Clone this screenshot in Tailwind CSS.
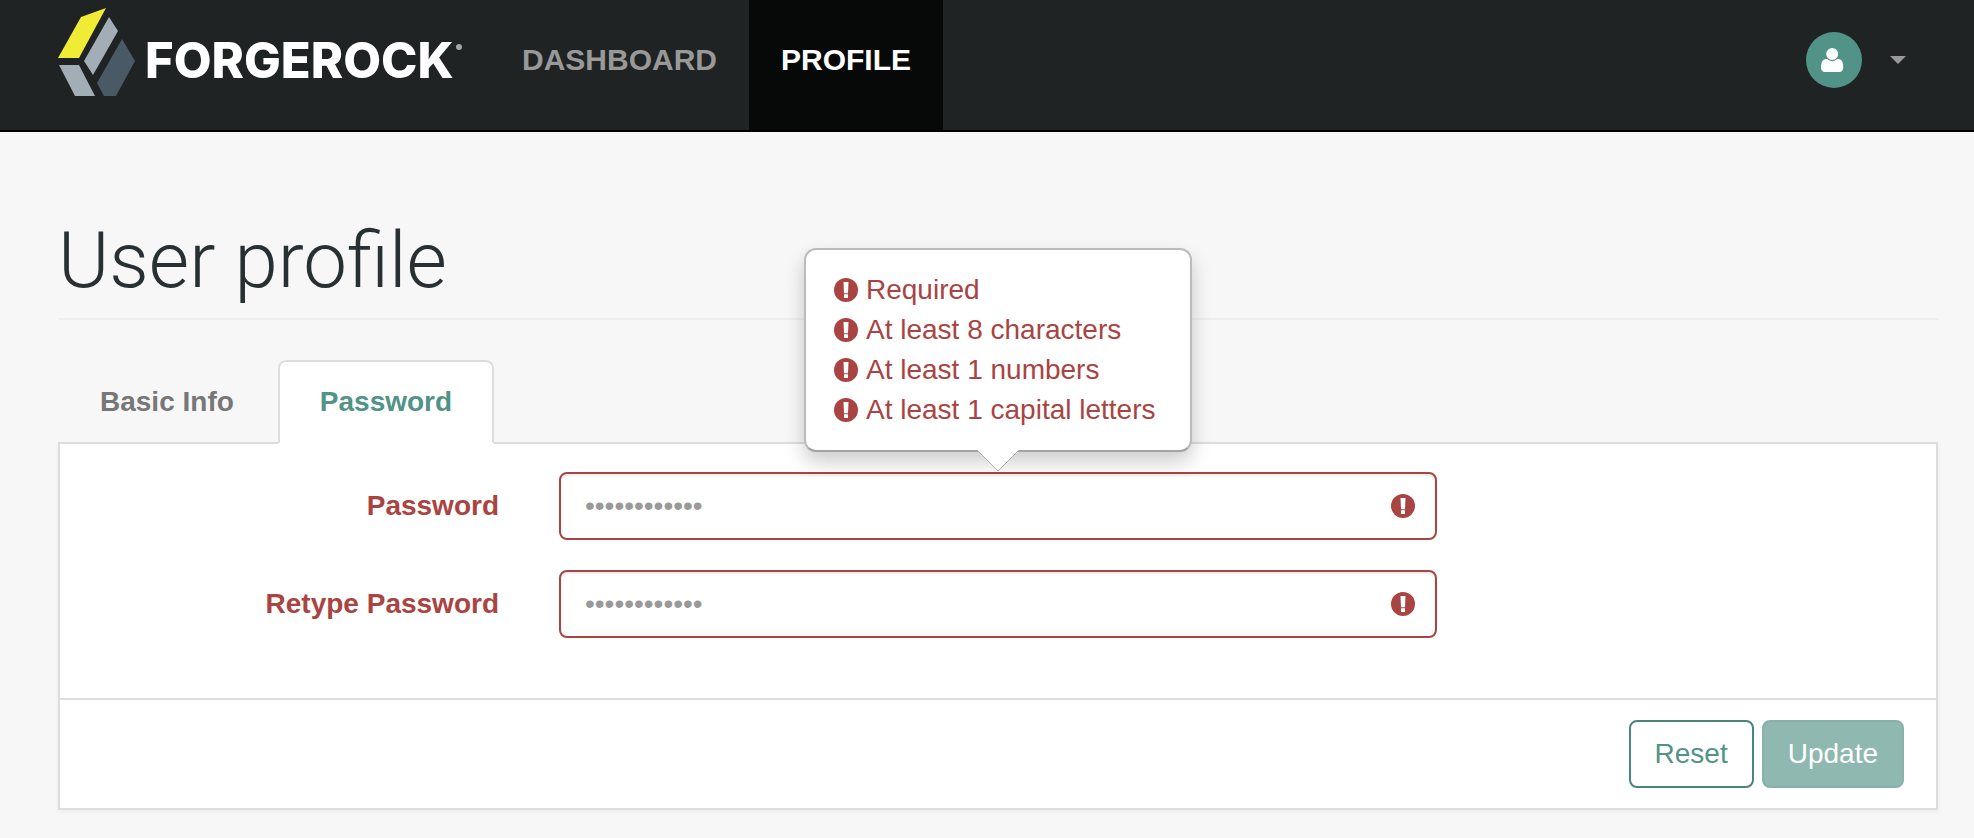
<!DOCTYPE html>
<html lang="en">
  <head>
    <meta charset="UTF-8" />
    <meta name="viewport" content="width=device-width, initial-scale=1.0" />
    <title>User profile</title>
    <script src="https://cdn.jsdelivr.net/npm/@tailwindcss/browser@4"></script>
  </head>
  <body
    class="min-h-screen bg-[#f7f7f7] font-['Liberation_Sans',Arial,sans-serif] text-[28px] leading-10 text-[#293033]"
  >
    <!-- Shared icon -->
    <svg class="hidden" aria-hidden="true">
      <symbol id="icon-alert" viewBox="0 0 24 24">
        <circle cx="12" cy="12" r="12" fill="#a94442" />
        <path d="M9.500 4h5l-.5 11.200h-4z M10 16.200h4V20h-4z" fill="#fff" />
      </symbol>
    </svg>

    <!-- Navbar -->
    <header
      class="flex items-start justify-between border-b-2 border-black bg-[#1f2324] pr-[68px] pl-[58px]"
    >
      <div class="flex items-start">
        <a href="#" class="mr-7 block pt-2" aria-label="ForgeRock">
          <svg width="404" height="90" viewBox="0 0 404 90">
            <path d="M48 0 23 9 0 50h21z" fill="#f0eb35" />
            <path d="M51 9 60 23 35 67 26 53z" fill="#a3adb6" />
            <path d="M64 31 77 53 58 88H46L39 75z" fill="#4a5966" />
            <path d="M1 57h20l16 31H17z" fill="#a3adb6" />
            <text
              x="87"
              y="70"
              fill="#fff"
              font-family="Inter, sans-serif"
              font-weight="800"
              font-size="49"
            >
              FORGEROCK
            </text>
            <circle cx="401" cy="39" r="3" fill="#a3a6a8" />
          </svg>
        </a>
        <nav class="flex text-[30px] font-bold">
          <a href="#" class="block px-8 pt-10 pb-[50px] text-[#999]"
            >DASHBOARD</a
          >
          <a href="#" class="block bg-[#070908] px-8 pt-10 pb-[50px] text-white"
            >PROFILE</a
          >
        </nav>
      </div>
      <button type="button" class="mt-8 flex items-center gap-7" aria-label="User menu">
        <svg width="56" height="56" viewBox="0 0 56 56">
          <circle cx="28" cy="28" r="28" fill="#519387" />
          <path
            d="M20 27h12.500c3.500 0 4.700 4 4.700 8.500 0 2.800-1.500 4.500-4 4.500H19c-2.500 0-4-1.700-4-4.500 0-4.500 1.500-8.500 5-8.500z"
            fill="#fff"
          />
          <circle cx="26.200" cy="22" r="6.600" fill="#fff" stroke="#519387" stroke-width="1.200" />
        </svg>
        <svg width="16" height="8" viewBox="0 0 16 8">
          <path d="M0 0h16L8 8z" fill="#999" />
        </svg>
      </button>
    </header>

    <main class="pt-[84px] pr-9 pb-7 pl-[58px]">
      <h1
        class="border-b-2 border-[#eee] pb-3 font-[Roboto,sans-serif] text-[78px] leading-[90px] font-light"
      >
        User profile
      </h1>

      <!-- Tabs -->
      <nav class="mt-10 flex font-bold">
        <a
          href="#"
          class="-mb-0.5 mr-0.5 block rounded-t-lg border-2 border-transparent px-10 py-5 text-[#777]"
          >Basic Info</a
        >
        <a
          href="#"
          class="relative -mb-0.5 block rounded-t-lg border-2 border-[#ddd] border-b-white bg-white px-10 py-5 text-[#519387]"
          >Password</a
        >
      </nav>

      <!-- Panel -->
      <form class="border-2 border-[#ddd] bg-white shadow-[0_2px_4px_rgba(0,0,0,0.05)]">
        <div class="flex flex-col gap-[30px] pt-7 pb-[60px]">
          <div class="grid grid-cols-4 items-center">
            <label
              for="password"
              class="px-[30px] text-right font-bold text-[#a94442]"
              >Password</label
            >
            <div class="col-span-2 px-[30px]">
              <div class="relative">
                <input
                  id="password"
                  type="password"
                  placeholder="••••••••••••"
                  class="block h-[68px] w-full rounded-lg border-2 border-[#a94442] bg-white pr-16 pl-6 shadow-[inset_0_2px_2px_rgba(0,0,0,0.075)] outline-none placeholder:text-[#999]"
                />
                <svg class="absolute top-[22px] right-[22px] size-6">
                  <use href="#icon-alert" />
                </svg>

                <!-- Validation popover -->
                <div
                  class="absolute bottom-full left-1/2 mb-5 min-w-[388px] -translate-x-1/2 rounded-xl border-2 border-[#bbb] border-b-[#a3a3a3] bg-white px-7 py-5 whitespace-nowrap text-[#a94442] shadow-[0_10px_20px_rgba(0,0,0,0.2)]"
                >
                  <ul>
                    <li class="flex items-center gap-2">
                      <svg class="size-6"><use href="#icon-alert" /></svg>
                      Required
                    </li>
                    <li class="flex items-center gap-2">
                      <svg class="size-6"><use href="#icon-alert" /></svg>
                      At least 8 characters
                    </li>
                    <li class="flex items-center gap-2">
                      <svg class="size-6"><use href="#icon-alert" /></svg>
                      At least 1 numbers
                    </li>
                    <li class="flex items-center gap-2">
                      <svg class="size-6"><use href="#icon-alert" /></svg>
                      At least 1 capital letters
                    </li>
                  </ul>
                  <svg
                    class="absolute top-full left-1/2 -translate-x-1/2"
                    width="44"
                    height="22"
                    viewBox="0 0 44 22"
                  >
                    <path d="M1 0h42L22 21z" fill="#fff" />
                    <path d="M1 0 22 21 43 0" fill="none" stroke="#b0b0b0" />
                  </svg>
                </div>
              </div>
            </div>
          </div>

          <div class="grid grid-cols-4 items-center">
            <label
              for="retype"
              class="px-[30px] text-right font-bold text-[#a94442]"
              >Retype Password</label
            >
            <div class="col-span-2 px-[30px]">
              <div class="relative">
                <input
                  id="retype"
                  type="password"
                  placeholder="••••••••••••"
                  class="block h-[68px] w-full rounded-lg border-2 border-[#a94442] bg-white pr-16 pl-6 shadow-[inset_0_2px_2px_rgba(0,0,0,0.075)] outline-none placeholder:text-[#999]"
                />
                <svg class="absolute top-[22px] right-[22px] size-6">
                  <use href="#icon-alert" />
                </svg>
              </div>
            </div>
          </div>
        </div>

        <div class="flex justify-end gap-2 border-t-2 border-[#ddd] py-5 pr-8">
          <button
            type="reset"
            class="rounded-lg border-2 border-[#48857a] bg-white px-6 py-3 text-[#519387]"
          >
            Reset
          </button>
          <button
            type="submit"
            class="rounded-lg border-2 border-[#8ab0a8] bg-[#8fb8b0] px-6 py-3 text-white"
          >
            Update
          </button>
        </div>
      </form>
    </main>
  </body>
</html>
